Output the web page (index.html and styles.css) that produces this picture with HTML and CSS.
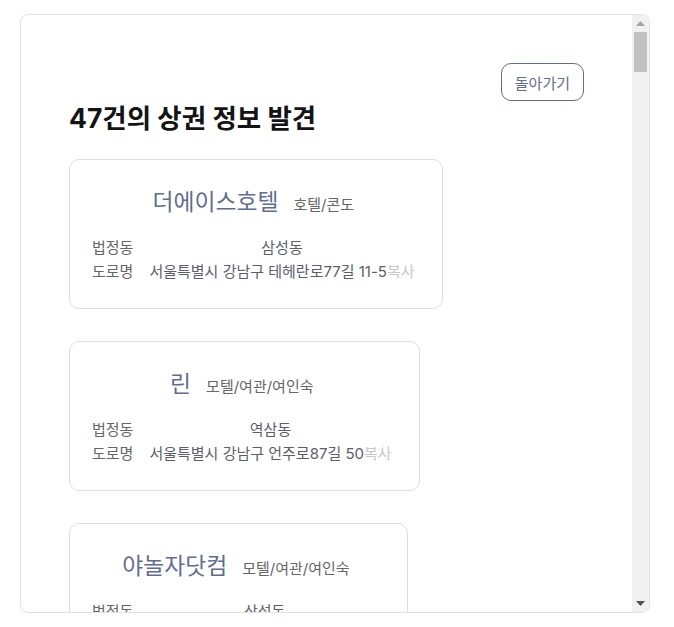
FILE: index.html
```html
<!DOCTYPE html>
<html lang="ko">
<head>
<meta charset="utf-8">
<title>상권 정보</title>
<link rel="stylesheet" href="styles.css">
</head>
<body>
<div class="panel">
  <div class="viewport">
    <div class="inner">
      <div class="top-bar">
        <button class="back-btn" type="button">돌아가기</button>
      </div>
      <h2 class="result-title">47건의 상권 정보 발견</h2>
      <div class="list">
        <div class="card">
          <div class="card-head">
            <span class="name">더에이스호텔</span>
            <span class="category">호텔/콘도</span>
          </div>
          <div class="info">
            <span class="label">법정동</span>
            <span class="value">삼성동</span>
            <span class="label">도로명</span>
            <span class="value">서울특별시 강남구 테헤란로77길 11-5<span class="copy">복사</span></span>
          </div>
        </div>
        <div class="card">
          <div class="card-head">
            <span class="name">린</span>
            <span class="category">모텔/여관/여인숙</span>
          </div>
          <div class="info">
            <span class="label">법정동</span>
            <span class="value">역삼동</span>
            <span class="label">도로명</span>
            <span class="value">서울특별시 강남구 언주로87길 50<span class="copy">복사</span></span>
          </div>
        </div>
        <div class="card">
          <div class="card-head">
            <span class="name">야놀자닷컴</span>
            <span class="category">모텔/여관/여인숙</span>
          </div>
          <div class="info">
            <span class="label">법정동</span>
            <span class="value">삼성동</span>
            <span class="label">도로명</span>
            <span class="value">서울특별시 강남구 테헤란로 123<span class="copy">복사</span></span>
          </div>
        </div>
      </div>
    </div>
  </div>
  <div class="scrollbar" aria-hidden="true">
    <div class="sb-btn">
      <svg width="9" height="5" viewBox="0 0 9 5"><polygon points="0,5 9,5 4.5,0" fill="#a3a3a3"/></svg>
    </div>
    <div class="sb-track">
      <div class="sb-thumb"></div>
    </div>
    <div class="sb-btn">
      <svg width="9" height="5" viewBox="0 0 9 5"><polygon points="0,0 9,0 4.5,5" fill="#505050"/></svg>
    </div>
  </div>
</div>
</body>
</html>
```
FILE: styles.css
```css
* { box-sizing: border-box; }
html, body { margin: 0; padding: 0; background: #fff; }
body {
  font-family: Inter, "Noto Sans CJK KR", sans-serif;
  color: #333;
}
.panel {
  margin: 14px 0 0 20px;
  width: 630px;
  height: 599px;
  border: 1px solid #e2e2e2;
  border-radius: 8px;
  overflow: hidden;
  background: #fff;
  display: flex;
}
.viewport {
  flex: 1;
  min-width: 0;
  overflow: hidden;
}
.scrollbar {
  width: 17px;
  flex: none;
  display: flex;
  flex-direction: column;
  background: #f1f1f1;
}
.sb-btn {
  height: 17px;
  display: flex;
  align-items: center;
  justify-content: center;
}
.sb-btn svg { display: block; }
.sb-track {
  flex: 1;
  padding: 0 2px;
}
.sb-thumb {
  height: 40px;
  background: #c1c1c1;
}
.inner {
  padding: 48px;
}
.top-bar {
  display: flex;
  justify-content: flex-end;
}
.back-btn {
  height: 38px;
  padding: 0 13px;
  border: 1px solid #5f6d92;
  border-radius: 10px;
  background: #fff;
  color: #5f6d92;
  font-family: Inter, "Noto Sans CJK KR", sans-serif;
  font-size: 15px;
}
.result-title {
  margin: 0 0 23px;
  font-size: 26.5px;
  line-height: 35px;
  font-weight: 700;
  color: #141414;
}
.list {
  display: flex;
  flex-direction: column;
  align-items: flex-start;
  gap: 32px;
}
.card {
  border: 1px solid #dddde2;
  border-radius: 10px;
  padding: 26px 27px 24px 22px;
  background: #fff;
}
.card-head {
  display: flex;
  justify-content: center;
  align-items: baseline;
  gap: 15px;
  height: 32px;
  margin-bottom: 18px;
}
.name {
  font-size: 22.8px;
  line-height: 32px;
  color: #5f6d92;
}
.category {
  font-size: 15px;
  color: #666;
}
.info {
  display: grid;
  grid-template-columns: auto auto;
  column-gap: 16px;
  font-size: 15px;
  line-height: 24px;
}
.label {
  color: #666;
}
.value {
  color: #5a5f6b;
  text-align: center;
  white-space: nowrap;
}
.copy {
  color: #c8c8c8;
}
```
